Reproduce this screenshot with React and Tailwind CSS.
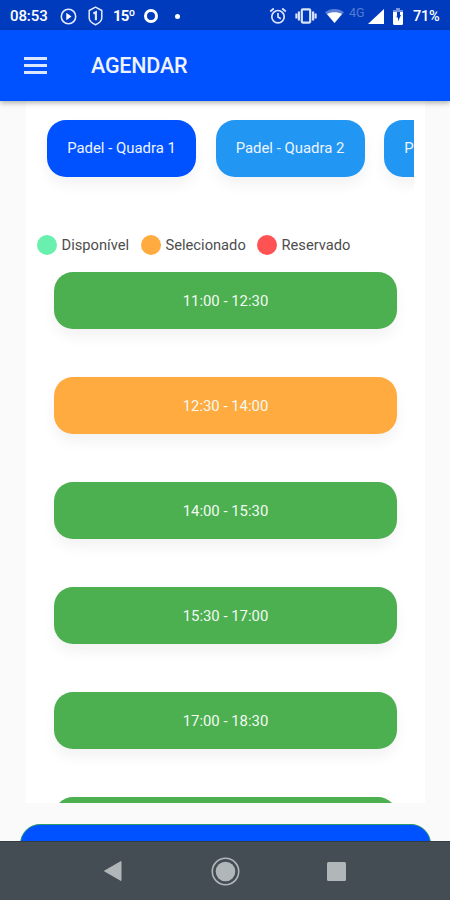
import React, { useState } from "react"

const COURTS = ["Padel - Quadra 1", "Padel - Quadra 2", "Padel - Quadra 3"]

const SLOTS = [
  "11:00 - 12:30",
  "12:30 - 14:00",
  "14:00 - 15:30",
  "15:30 - 17:00",
  "17:00 - 18:30",
  "18:30 - 20:00",
]

// ANDROID STATUS BAR
function StatusBar() {
  return (
    <div className="flex h-[30px] shrink-0 items-center justify-between bg-[#003bbd] pl-[10px] pr-[9px] pt-[2px] text-[15px] font-medium text-white">
      <div className="flex items-center">
        <span className="w-[50px] tracking-[-0.1px]">08:53</span>
        <svg width="17" height="17" viewBox="0 0 17 17" fill="none" stroke="#e4ebff" strokeWidth="1.6">
          <circle cx="8.5" cy="8.5" r="7.2" />
          <path d="M6.3 4.8v7.4l5.2-3.7z" fill="#fff" stroke="none" />
        </svg>
        <svg className="ml-[11px]" width="15" height="20" viewBox="0 0 15 20" fill="none" stroke="#e4ebff" strokeWidth="1.5">
          <path d="M7.5 1.2 13.8 4.5v7.5c0 3-2.8 5.2-6.3 6.7-3.5-1.5-6.3-3.7-6.3-6.7V4.5z" strokeLinejoin="round" />
          <path d="M5.4 7.5 7.9 6.2v8" strokeWidth="2.1" />
        </svg>
        <span className="ml-[10px] w-[31px] font-bold tracking-[-0.8px]">15º</span>
        <span className="h-[14px] w-[14px] rounded-full border-[3px] border-white" />
        <span className="ml-[17px] h-[5px] w-[5px] rounded-full bg-white" />
      </div>

      <div className="flex items-center">
        <svg width="18" height="18" viewBox="0 0 18 18" fill="none" stroke="#dce5ff" strokeWidth="1.7">
          <circle cx="9" cy="9.7" r="6.2" />
          <path d="m1.2 4.5 3.6-3M16.8 4.5l-3.6-3M9 6v4l2.8 1.8" />
        </svg>
        <svg className="ml-[8px]" width="22" height="16" viewBox="0 0 22 16" fill="none" stroke="#dce5ff">
          <rect x="6.8" y="1.4" width="8.4" height="13.2" rx="1" strokeWidth="2.2" />
          <path d="M3.9 3.5v9M18.1 3.5v9M1.4 5.5v5M20.6 5.5v5" strokeWidth="2.1" />
        </svg>
        <svg className="ml-[8px]" width="19" height="16" viewBox="0 0 19 16">
          <path d="M0 4.3C5.2-.2 13.8-.2 19 4.3L9.5 15z" fill="#5c80d6" />
          <path d="M2 6c4.300-2.200 10.700-2.200 15 0l-7.500 9z" fill="#fff" />
        </svg>
        <span className="mb-[6px] ml-[5px] w-[18px] text-[12.5px] font-normal leading-none text-[#547bd2]">4G</span>
        <svg className="ml-px" width="16" height="15" viewBox="0 0 16 15">
          <path d="M16 0v15H0z" fill="#fff" />
        </svg>
        <svg className="ml-[9px]" width="10" height="17" viewBox="0 0 10 17">
          <path d="M3 0h4v2h3v4H0V2h3z" fill="#7795dc" />
          <path d="M0 4h10v11.5c0 .8-.5 1.5-1.5 1.5h-7C.5 17 0 16.3 0 15.5z" fill="#fff" />
          <path d="M4 4h3v3h1l-3 6.5V9.500H3.500L4 7z" fill="#003bbd" />
        </svg>
        <span className="ml-[10px] w-[28px] whitespace-nowrap pt-px text-[14.5px] tracking-[-0.2px]">71%</span>
      </div>
    </div>
  )
}

function LegendItem({ color, label, className }) {
  return (
    <div className={`flex items-center ${className}`}>
      <span className={`mr-[4.5px] h-5 w-5 rounded-full ${color}`} />
      <span className="whitespace-nowrap pt-px">{label}</span>
    </div>
  )
}

// ANDROID NAVIGATION BAR
function NavBar() {
  return (
    <div className="flex h-[59px] shrink-0 items-center border-t border-[#343b42] bg-[#454d54] pl-[103px]">
      <svg width="19" height="22" viewBox="0 0 19 22">
        <path d="M18 1.5v19L1.5 11z" fill="#b1b6b9" stroke="#b1b6b9" strokeWidth="1" strokeLinejoin="round" />
      </svg>
      <svg className="ml-[89px]" width="29" height="29" viewBox="0 0 29 29">
        <circle cx="14.5" cy="14.5" r="13.2" fill="none" stroke="#b1b6b9" strokeWidth="1.6" />
        <circle cx="14.5" cy="14.5" r="9.8" fill="#b1b6b9" />
      </svg>
      <span className="ml-[87px] h-[19px] w-[19px] rounded-[1.5px] bg-[#b1b6b9]" />
    </div>
  )
}

export default function App() {
  const [court, setCourt] = useState(0)
  const [selected, setSelected] = useState(1)

  return (
    <div className="flex h-[900px] w-[450px] flex-col overflow-hidden bg-[#fafafa] font-[Roboto,sans-serif]">
      <StatusBar />

      {/* APP BAR */}
      <header className="z-10 flex h-[70.5px] shrink-0 items-center bg-[#0051ff] pl-6 shadow-[0_2px_5px_rgba(0,0,0,0.3)]">
        <button className="flex w-[23px] flex-col gap-[4px]" aria-label="Menu">
          <span className="h-[3px] w-full bg-[#dbe6ff]" />
          <span className="h-[3px] w-full bg-[#dbe6ff]" />
          <span className="h-[3px] w-full bg-[#dbe6ff]" />
        </button>
        <h1 className="ml-[44px] pt-[2px] text-[21.5px] font-medium tracking-[-0.2px] text-[#eef3ff]">AGENDAR</h1>
      </header>

      <main className="flex min-h-0 flex-1 flex-col overflow-hidden">
        <div className="ml-[26px] flex h-[702.5px] w-[399px] shrink-0 flex-col overflow-hidden bg-white">
          {/* COURTS */}
          <div className="ml-[11px] mr-[11px] flex h-[115px] shrink-0 gap-[19.5px] overflow-hidden pl-[10px] pt-[19.5px]">
            {COURTS.map((name, i) => (
              <button
                key={name}
                onClick={() => setCourt(i)}
                className={`h-[57px] w-[149px] shrink-0 whitespace-nowrap rounded-[19px] text-[14.9px] text-[#edf4ff] shadow-[0_8px_14px_rgba(0,0,0,0.05)] 
                  ${court === i ? "bg-[#0051ff]" : "bg-[#2196f3]"}`}
              >
                {name}
              </button>
            ))}
          </div>

          {/* LEGEND */}
          <div className="flex h-[56.5px] shrink-0 items-center pl-[11px] pt-[2px] text-[14.7px] text-[#4d4d4d]">
            <LegendItem color="bg-[#69f0ae]" label="Disponível" className="w-[104px]" />
            <LegendItem color="bg-[#ffab40]" label="Selecionado" className="w-[116px]" />
            <LegendItem color="bg-[#ff5252]" label="Reservado" className="" />
          </div>

          {/* TIME SLOTS */}
          <div className="flex flex-col gap-12 pl-[28px]">
            {SLOTS.map((slot, i) => (
              <button
                key={slot}
                onClick={() => setSelected(i)}
                className={`h-[57px] w-[343px] shrink-0 rounded-[19px] pt-px text-[14.9px] text-[#f2faf2] shadow-[0_8px_14px_rgba(0,0,0,0.05)] 
                  ${selected === i ? "bg-[#ffab40]" : "bg-[#4caf50]"}`}
              >
                {slot}
              </button>
            ))}
          </div>
        </div>

        {/* CONFIRM BUTTON */}
        <button
          className="ml-[20px] mt-[21px] h-[57px] w-[411px] shrink-0 rounded-[20px] border border-[#2f9a6a] bg-[#0051ff]"
          aria-label="Agendar"
        />
      </main>

      <NavBar />
    </div>
  )
}
